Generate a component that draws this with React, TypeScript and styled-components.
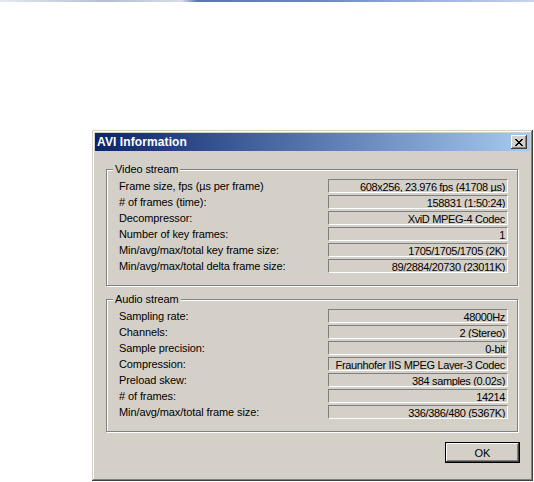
import { Fragment } from "react";
import styled, { createGlobalStyle } from "styled-components";

const GlobalStyle = createGlobalStyle`
  html, body {
    margin: 0;
    padding: 0;
    background: #ffffff;
  }
  body {
    font-family: "Liberation Sans", Arial, sans-serif;
    font-size: 11px;
    color: #000;
  }
`;

const TopStrip = styled.div`
  height: 2px;
  background: linear-gradient(
    to right,
    #e4e8f0 0%,
    #b4bed4 20%,
    #d8dcea 34%,
    #5a74b8 37%,
    #6c86c4 60%,
    #90a6d8 75%,
    #c8d4ec 100%
  );
`;

const Dialog = styled.div`
  margin: 128px 0 0 92px;
  width: 441px;
  height: 351px;
  box-sizing: border-box;
  padding: 3px;
  background: #d4d0c8;
  box-shadow: inset -1px -1px 0 #404040, inset 1px 1px 0 #d4d0c8,
    inset -2px -2px 0 #808080, inset 2px 2px 0 #ffffff;
  display: flex;
  flex-direction: column;
`;

const TitleBar = styled.div`
  height: 18px;
  display: flex;
  align-items: center;
  justify-content: space-between;
  padding: 0 3px 0 2px;
  background: linear-gradient(to right, #0a246a, #a6caf0);
`;

const Title = styled.span`
  color: #ffffff;
  font-weight: bold;
  font-size: 12px;
  letter-spacing: 0.1px;
`;

const CloseButton = styled.button`
  width: 16px;
  height: 14px;
  padding: 0;
  border: none;
  background: #d4d0c8;
  box-shadow: inset -1px -1px 0 #404040, inset 1px 1px 0 #ffffff,
    inset -2px -2px 0 #808080;
  display: flex;
  align-items: center;
  justify-content: center;
`;

const Client = styled.div`
  flex: 1;
  display: flex;
  flex-direction: column;
  padding: 12px 12px 0 11px;
`;

const Group = styled.fieldset<{ $gap?: number }>`
  margin: ${(p) => p.$gap ?? 0}px 0 0 0;
  padding: 4px 9px 12px 6px;
  border: 1px solid #808080;
  box-shadow: inset 1px 1px 0 #ffffff, 1px 1px 0 #ffffff;
  min-width: 0;
`;

const Legend = styled.legend`
  padding: 0 2px;
  line-height: 12px;
  letter-spacing: -0.1px;
  background: #d4d0c8;
`;

const Rows = styled.div`
  display: grid;
  grid-template-columns: 1fr 180px;
  row-gap: 2px;
  padding-left: 6px;
`;

const Label = styled.span`
  height: 14px;
  line-height: 14px;
  letter-spacing: -0.1px;
  white-space: nowrap;
`;

const Value = styled.span`
  height: 14px;
  line-height: 13px;
  box-sizing: border-box;
  padding: 1px 2px 0 0;
  text-align: right;
  white-space: nowrap;
  overflow: hidden;
  letter-spacing: -0.35px;
  border-top: 1px solid #808080;
  border-left: 1px solid #808080;
  border-bottom: 1px solid #ffffff;
  border-right: 1px solid #ffffff;
`;

const Footer = styled.div`
  display: flex;
  justify-content: flex-end;
  margin-right: -2px;
  padding-top: 10px;
`;

const OkButton = styled.button`
  width: 75px;
  height: 21px;
  padding: 0;
  font-family: "Liberation Sans", Arial, sans-serif;
  font-size: 11px;
  color: #000;
  background: #d4d0c8;
  border: 1px solid #000000;
  box-shadow: inset -1px -1px 0 #404040, inset 1px 1px 0 #ffffff,
    inset -2px -2px 0 #808080;
`;

const video: [string, string][] = [
  ["Frame size, fps (\u00b5s per frame)", "608x256, 23.976 fps (41708 \u00b5s)"],
  ["# of frames (time):", "158831 (1:50:24)"],
  ["Decompressor:", "XviD MPEG-4 Codec"],
  ["Number of key frames:", "1"],
  ["Min/avg/max/total key frame size:", "1705/1705/1705 (2K)"],
  ["Min/avg/max/total delta frame size:", "89/2884/20730 (23011K)"],
];

const audio: [string, string][] = [
  ["Sampling rate:", "48000Hz"],
  ["Channels:", "2 (Stereo)"],
  ["Sample precision:", "0-bit"],
  ["Compression:", "Fraunhofer IIS MPEG Layer-3 Codec"],
  ["Preload skew:", "384 samples (0.02s)"],
  ["# of frames:", "14214"],
  ["Min/avg/max/total frame size:", "336/386/480 (5367K)"],
];

const InfoRows = ({ items }: { items: [string, string][] }) => (
  <Rows>
    {items.map(([label, value]) => (
      <Fragment key={label}>
        <Label>{label}</Label>
        <Value>{value}</Value>
      </Fragment>
    ))}
  </Rows>
);

const CloseGlyph = () => (
  <svg width="8" height="7" viewBox="0 0 8 7" shapeRendering="crispEdges">
    <path
      d="M0 0h2v1h-2zM6 0h2v1h-2zM1 1h2v1h-2zM5 1h2v1h-2zM2 2h4v1h-4zM3 3h2v1h-2zM2 4h4v1h-4zM1 5h2v1h-2zM5 5h2v1h-2zM0 6h2v1h-2zM6 6h2v1h-2z"
      fill="#000"
    />
  </svg>
);

export default function App() {
  return (
    <>
      <GlobalStyle />
      <TopStrip />
      <Dialog>
        <TitleBar>
          <Title>AVI Information</Title>
          <CloseButton aria-label="Close">
            <CloseGlyph />
          </CloseButton>
        </TitleBar>
        <Client>
          <Group>
            <Legend>Video stream</Legend>
            <InfoRows items={video} />
          </Group>
          <Group $gap={7}>
            <Legend>Audio stream</Legend>
            <InfoRows items={audio} />
          </Group>
          <Footer>
            <OkButton>OK</OkButton>
          </Footer>
        </Client>
      </Dialog>
    </>
  );
}
